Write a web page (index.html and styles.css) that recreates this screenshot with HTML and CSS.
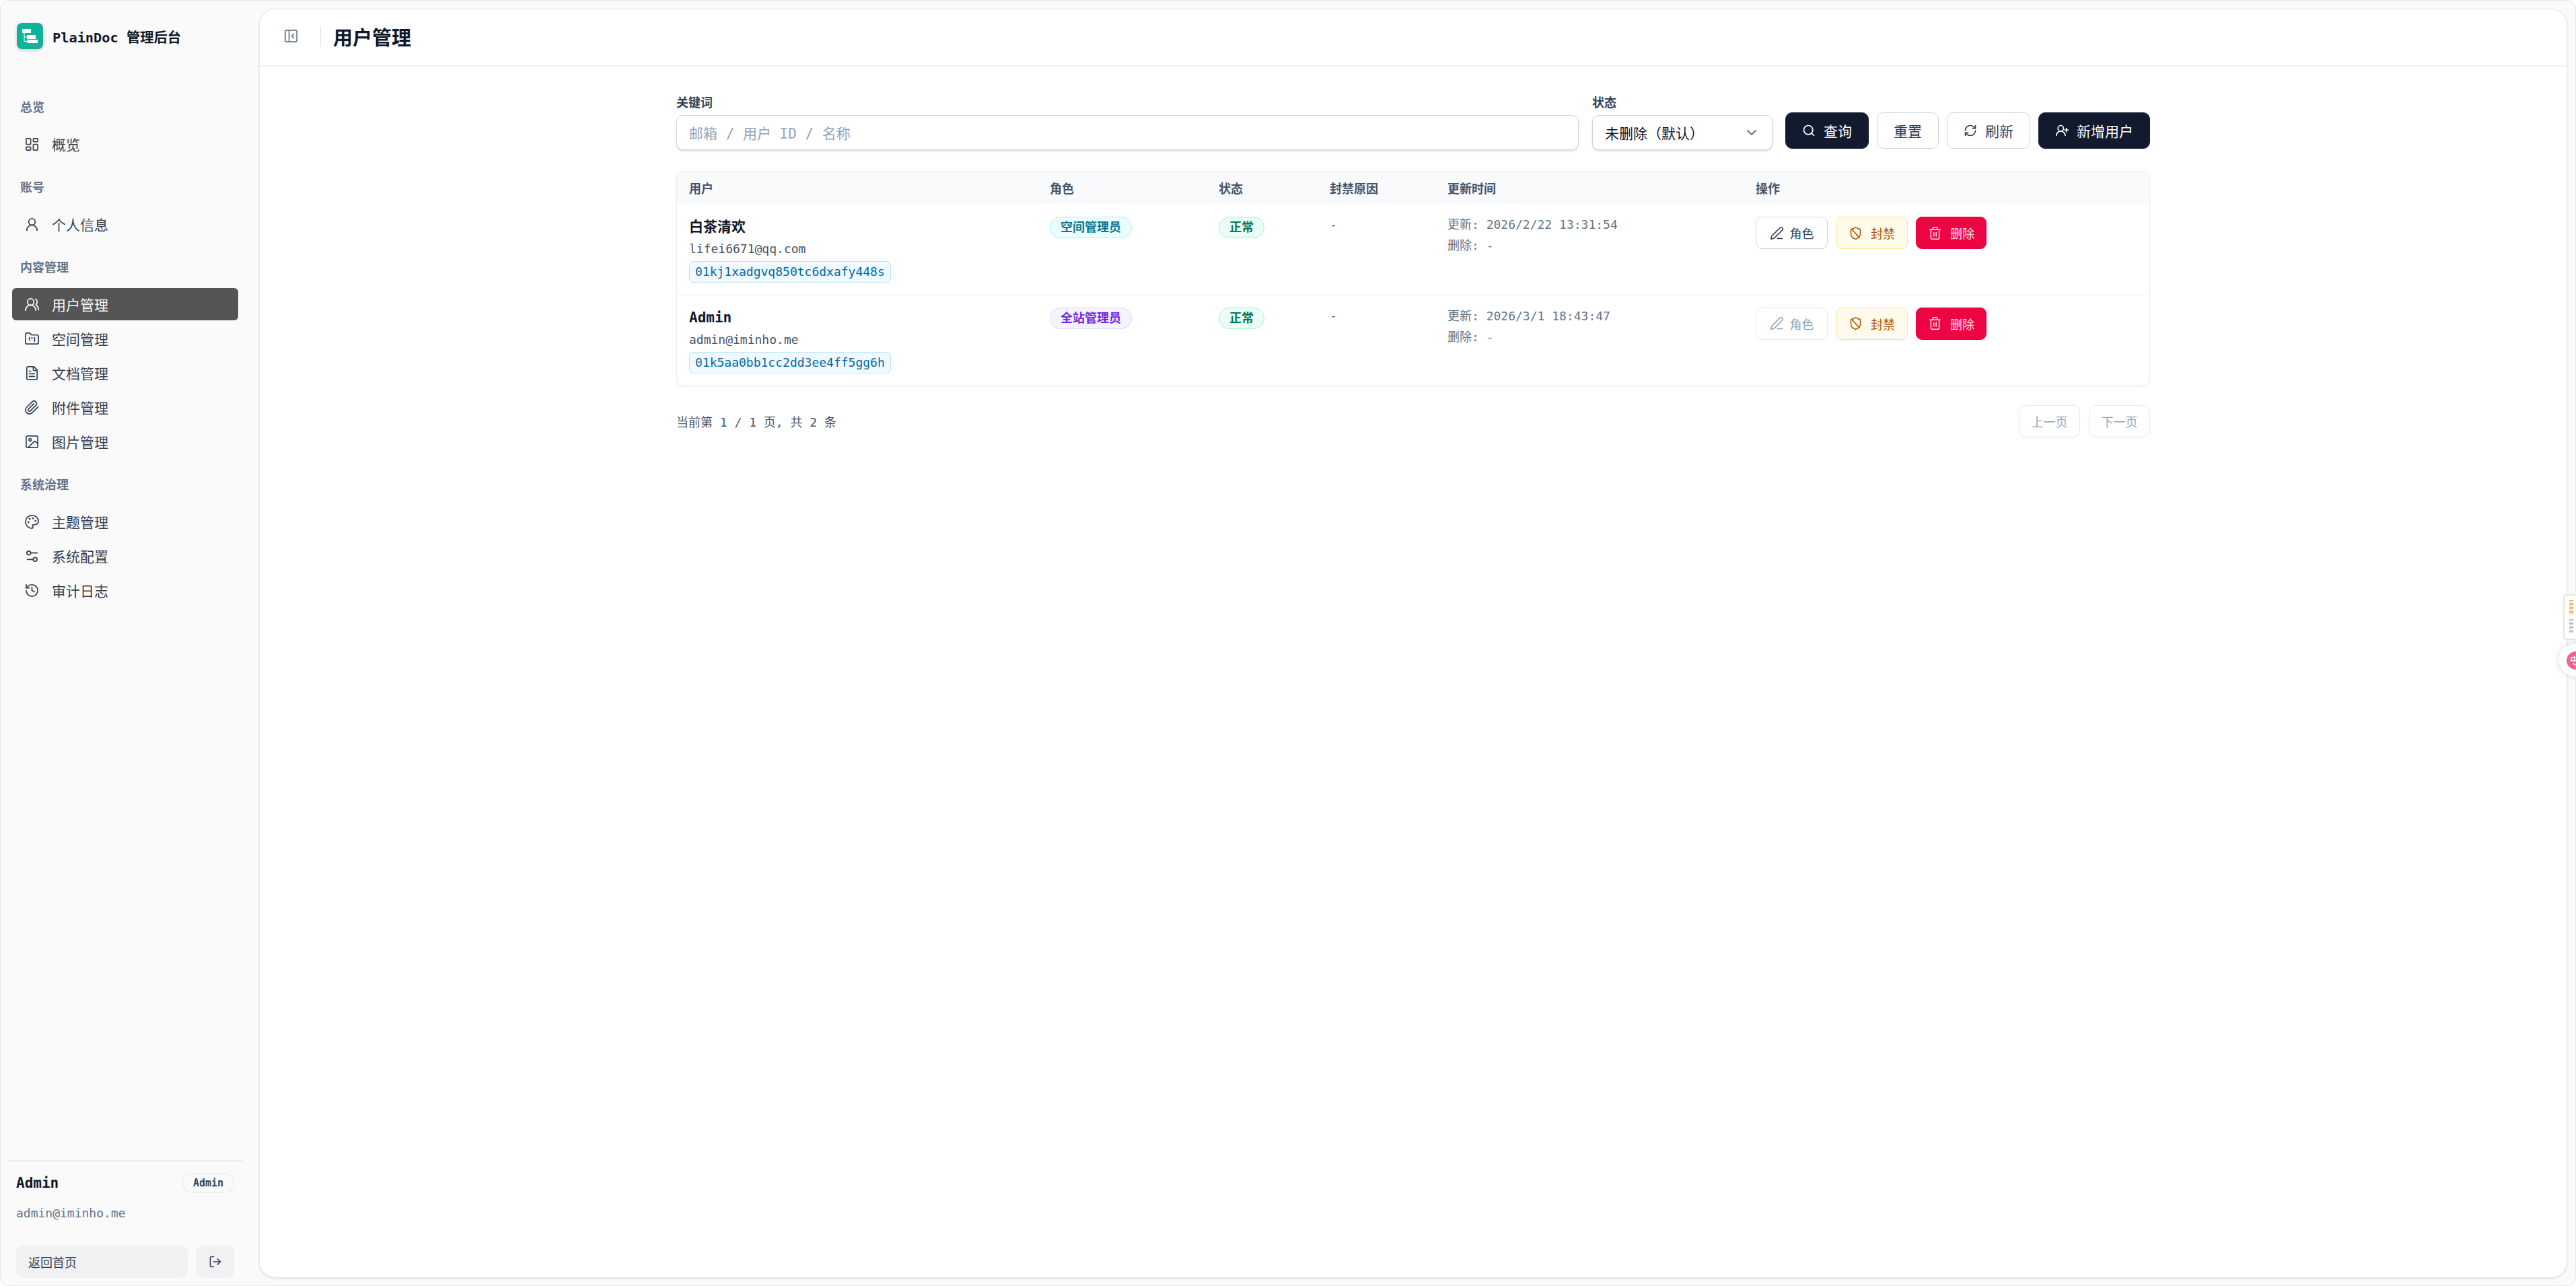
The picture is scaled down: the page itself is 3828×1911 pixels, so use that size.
FILE: index.html
```html
<!DOCTYPE html>
<html lang="zh-CN">
<head>
    <meta charset="UTF-8">
    <meta name="viewport" content="width=device-width, initial-scale=1.0">
    <title>用户管理 - PlainDoc 管理后台</title>
    <link rel="stylesheet" href="styles.css">
</head>
<body>
    <div class="app">
        <aside class="sidebar">
            <div class="brand">
                <span class="brand-logo">
                    <svg viewBox="0 0 39 39" width="39" height="39"><rect x="8" y="9" width="13" height="6" fill="#fff"/><rect x="15" y="18" width="13" height="6" fill="#fff"/><rect x="15" y="25" width="16" height="5" fill="#fff"/><path d="M11 15v12.5h4M11 21h4" fill="none" stroke="#fff" stroke-width="1"/></svg>
                </span>
                <span class="brand-name">PlainDoc 管理后台</span>
            </div>

            <nav class="nav">
                <div class="nav-group">
                    <div class="nav-label">总览</div>
                    <a class="nav-item">
                        <svg class="icon" viewBox="0 0 24 24"><rect x="3" y="3" width="7" height="9" rx="1"/><rect x="14" y="3" width="7" height="5" rx="1"/><rect x="14" y="12" width="7" height="9" rx="1"/><rect x="3" y="16" width="7" height="5" rx="1"/></svg>
                        概览
                    </a>
                </div>
                <div class="nav-group">
                    <div class="nav-label">账号</div>
                    <a class="nav-item">
                        <svg class="icon" viewBox="0 0 24 24"><circle cx="12" cy="8" r="5"/><path d="M20 21a8 8 0 0 0-16 0"/></svg>
                        个人信息
                    </a>
                </div>
                <div class="nav-group">
                    <div class="nav-label">内容管理</div>
                    <a class="nav-item active">
                        <svg class="icon" viewBox="0 0 24 24"><path d="M18 21a8 8 0 0 0-16 0"/><circle cx="10" cy="8" r="5"/><path d="M22 20c0-3.4-2-6.5-4-8a5 5 0 0 0-.5-8.5"/></svg>
                        用户管理
                    </a>
                    <a class="nav-item">
                        <svg class="icon" viewBox="0 0 24 24"><path d="M20 20a2 2 0 0 0 2-2V8a2 2 0 0 0-2-2h-7.9a2 2 0 0 1-1.7-.9l-.8-1.2A2 2 0 0 0 7.9 3H4a2 2 0 0 0-2 2v13a2 2 0 0 0 2 2Z"/><path d="M8 10v4M12 10v2M16 10v6"/></svg>
                        空间管理
                    </a>
                    <a class="nav-item">
                        <svg class="icon" viewBox="0 0 24 24"><path d="M15 2H6a2 2 0 0 0-2 2v16a2 2 0 0 0 2 2h12a2 2 0 0 0 2-2V7Z"/><path d="M14 2v4a2 2 0 0 0 2 2h4M10 9H8M16 13H8M16 17H8"/></svg>
                        文档管理
                    </a>
                    <a class="nav-item">
                        <svg class="icon" viewBox="0 0 24 24"><path d="m21.44 11.05-9.19 9.19a6 6 0 0 1-8.49-8.49l8.57-8.57A4 4 0 1 1 18 8.84l-8.59 8.57a2 2 0 0 1-2.83-2.83l8.49-8.48"/></svg>
                        附件管理
                    </a>
                    <a class="nav-item">
                        <svg class="icon" viewBox="0 0 24 24"><rect x="3" y="3" width="18" height="18" rx="2"/><circle cx="9" cy="9" r="2"/><path d="m21 15-3.1-3.1a2 2 0 0 0-2.8 0L6 21"/></svg>
                        图片管理
                    </a>
                </div>
                <div class="nav-group">
                    <div class="nav-label">系统治理</div>
                    <a class="nav-item">
                        <svg class="icon" viewBox="0 0 24 24"><circle cx="13.5" cy="6.5" r=".6"/><circle cx="17.5" cy="10.5" r=".6"/><circle cx="8.5" cy="7.5" r=".6"/><circle cx="6.5" cy="12.5" r=".6"/><path d="M12 2C6.5 2 2 6.5 2 12s4.5 10 10 10c.9 0 1.6-.7 1.6-1.7 0-.4-.2-.8-.4-1.1-.3-.3-.4-.7-.4-1.1a1.6 1.6 0 0 1 1.6-1.7h2c3 0 5.6-2.5 5.6-5.6C22 6 17.5 2 12 2Z"/></svg>
                        主题管理
                    </a>
                    <a class="nav-item">
                        <svg class="icon" viewBox="0 0 24 24"><path d="M20 7h-9M14 17H5"/><circle cx="17" cy="17" r="3"/><circle cx="7" cy="7" r="3"/></svg>
                        系统配置
                    </a>
                    <a class="nav-item">
                        <svg class="icon" viewBox="0 0 24 24"><path d="M3 12a9 9 0 1 0 9-9 9.75 9.75 0 0 0-6.74 2.74L3 8"/><path d="M3 3v5h5M12 7v5l4 2"/></svg>
                        审计日志
                    </a>
                </div>
            </nav>

            <div class="side-footer">
                <div class="side-user">
                    <span class="side-name">Admin</span>
                    <span class="side-badge">Admin</span>
                </div>
                <div class="side-email">admin@iminho.me</div>
                <div class="side-actions">
                    <a class="side-home">返回首页</a>
                    <a class="side-logout">
                        <svg class="icon" viewBox="0 0 24 24"><path d="M9 21H5a2 2 0 0 1-2-2V5a2 2 0 0 1 2-2h4M16 17l5-5-5-5M21 12H9"/></svg>
                    </a>
                </div>
            </div>
        </aside>

        <main class="main">
            <header class="topbar">
                <svg class="icon toggle" viewBox="0 0 24 24"><rect x="3" y="3" width="18" height="18" rx="2"/><path d="M9 3v18M16 15l-3-3 3-3"/></svg>
                <span class="topbar-sep"></span>
                <h1 class="page-title">用户管理</h1>
            </header>

            <div class="content">
                <form class="filters">
                    <div class="field field-grow">
                        <label class="field-label">关键词</label>
                        <div class="input placeholder">邮箱 / 用户 ID / 名称</div>
                    </div>
                    <div class="field field-status">
                        <label class="field-label">状态</label>
                        <div class="input select">
                            未删除（默认）
                            <svg class="chevron" viewBox="0 0 24 24"><path d="m6 9 6 6 6-6"/></svg>
                        </div>
                    </div>
                    <button type="button" class="btn btn-dark">
                        <svg class="icon" viewBox="0 0 24 24"><circle cx="11" cy="11" r="8"/><path d="m21 21-4.3-4.3"/></svg>
                        查询
                    </button>
                    <button type="button" class="btn btn-plain">重置</button>
                    <button type="button" class="btn btn-plain">
                        <svg class="icon" viewBox="0 0 24 24"><path d="M3 12a9 9 0 0 1 9-9 9.75 9.75 0 0 1 6.74 2.74L21 8"/><path d="M21 3v5h-5M21 12a9 9 0 0 1-9 9 9.75 9.75 0 0 1-6.74-2.74L3 16"/><path d="M8 16H3v5"/></svg>
                        刷新
                    </button>
                    <button type="button" class="btn btn-dark">
                        <svg class="icon" viewBox="0 0 24 24"><path d="M2 21a8 8 0 0 1 16 0"/><circle cx="10" cy="8" r="5"/><path d="M20 8v6M23 11h-6"/></svg>
                        新增用户
                    </button>
                </form>

                <div class="table-card">
                    <table class="table">
                        <thead>
                            <tr>
                                <th class="col-user">用户</th>
                                <th class="col-role">角色</th>
                                <th class="col-status">状态</th>
                                <th class="col-reason">封禁原因</th>
                                <th class="col-time">更新时间</th>
                                <th>操作</th>
                            </tr>
                        </thead>
                        <tbody>
                            <tr>
                                <td>
                                    <div class="user-name">白茶清欢</div>
                                    <div class="user-email">lifei6671@qq.com</div>
                                    <span class="user-id">01kj1xadgvq850tc6dxafy448s</span>
                                </td>
                                <td><span class="badge badge-cyan">空间管理员</span></td>
                                <td><span class="badge badge-green">正常</span></td>
                                <td class="reason">-</td>
                                <td class="time">
                                    <div>更新: 2026/2/22 13:31:54</div>
                                    <div>删除: -</div>
                                </td>
                                <td>
                                    <div class="actions">
                                        <button type="button" class="act act-plain">
                                            <svg class="icon" viewBox="0 0 24 24"><path d="M13 21h8"/><path d="M21.2 6.8a2.8 2.8 0 0 0-4-4L3.8 16.2a2 2 0 0 0-.5.8l-1.3 4.4a.5.5 0 0 0 .6.6l4.4-1.3a2 2 0 0 0 .8-.5Z"/></svg>
                                            角色
                                        </button>
                                        <button type="button" class="act act-warn">
                                            <svg class="icon" viewBox="0 0 24 24"><path d="M20 13c0 5-3.5 7.5-7.7 9a1 1 0 0 1-.6 0C7.5 20.5 4 18 4 13V6a1 1 0 0 1 1-1c2 0 4.5-1.2 6.2-2.7a1.2 1.2 0 0 1 1.6 0C14.5 3.8 17 5 19 5a1 1 0 0 1 1 1Z"/><path d="m6 6 12 13"/></svg>
                                            封禁
                                        </button>
                                        <button type="button" class="act act-danger">
                                            <svg class="icon" viewBox="0 0 24 24"><path d="M3 6h18M19 6v14a2 2 0 0 1-2 2H7a2 2 0 0 1-2-2V6M8 6V4a2 2 0 0 1 2-2h4a2 2 0 0 1 2 2v2M10 11v6M14 11v6"/></svg>
                                            删除
                                        </button>
                                    </div>
                                </td>
                            </tr>
                            <tr>
                                <td>
                                    <div class="user-name">Admin</div>
                                    <div class="user-email">admin@iminho.me</div>
                                    <span class="user-id">01k5aa0bb1cc2dd3ee4ff5gg6h</span>
                                </td>
                                <td><span class="badge badge-purple">全站管理员</span></td>
                                <td><span class="badge badge-green">正常</span></td>
                                <td class="reason">-</td>
                                <td class="time">
                                    <div>更新: 2026/3/1 18:43:47</div>
                                    <div>删除: -</div>
                                </td>
                                <td>
                                    <div class="actions">
                                        <button type="button" class="act act-plain act-disabled">
                                            <svg class="icon" viewBox="0 0 24 24"><path d="M13 21h8"/><path d="M21.2 6.8a2.8 2.8 0 0 0-4-4L3.8 16.2a2 2 0 0 0-.5.8l-1.3 4.4a.5.5 0 0 0 .6.6l4.4-1.3a2 2 0 0 0 .8-.5Z"/></svg>
                                            角色
                                        </button>
                                        <button type="button" class="act act-warn">
                                            <svg class="icon" viewBox="0 0 24 24"><path d="M20 13c0 5-3.5 7.5-7.7 9a1 1 0 0 1-.6 0C7.5 20.5 4 18 4 13V6a1 1 0 0 1 1-1c2 0 4.5-1.2 6.2-2.7a1.2 1.2 0 0 1 1.6 0C14.5 3.8 17 5 19 5a1 1 0 0 1 1 1Z"/><path d="m6 6 12 13"/></svg>
                                            封禁
                                        </button>
                                        <button type="button" class="act act-danger">
                                            <svg class="icon" viewBox="0 0 24 24"><path d="M3 6h18M19 6v14a2 2 0 0 1-2 2H7a2 2 0 0 1-2-2V6M8 6V4a2 2 0 0 1 2-2h4a2 2 0 0 1 2 2v2M10 11v6M14 11v6"/></svg>
                                            删除
                                        </button>
                                    </div>
                                </td>
                            </tr>
                        </tbody>
                    </table>
                </div>

                <div class="pager">
                    <span class="pager-text">当前第 1 / 1 页, 共 2 条</span>
                    <div class="pager-btns">
                        <button type="button" class="page-btn">上一页</button>
                        <button type="button" class="page-btn">下一页</button>
                    </div>
                </div>
            </div>
        </main>
    </div>

    <div class="float-tab">
        <span class="float-bars float-bars-on"></span>
        <span class="float-bars"></span>
    </div>
    <div class="float-ball">
        <span class="float-dot">
            <svg viewBox="0 0 14 16" width="14" height="16"><path d="M1 3h9v5H1zM5.5 1v7M5 11c-1 2 1 3.5 4 3" fill="none" stroke="#fff" stroke-width="1.5"/></svg>
        </span>
    </div>
</body>
</html>
```

FILE: styles.css
```css
* {
    box-sizing: border-box;
}

html, body {
    margin: 0;
    height: 100%;
}

body {
    font-family: "DejaVu Sans Mono", "Noto Sans CJK SC", monospace;
    background: #fff;
    color: #0f172a;
    overflow: hidden;
}

.app {
    display: flex;
    height: 100vh;
    background: #fafafa;
    border-radius: 14px;
    box-shadow: inset 0 0 0 1px #e8e8ea;
    padding: 13px 13px 12px 0;
}

.icon {
    width: 23px;
    height: 23px;
    flex: none;
    fill: none;
    stroke: currentColor;
    stroke-width: 1.8;
    stroke-linecap: round;
    stroke-linejoin: round;
}

/* sidebar */
.sidebar {
    width: 385px;
    flex: none;
    display: flex;
    flex-direction: column;
    padding: 21px 12px 0;
}

.brand {
    display: flex;
    align-items: center;
    gap: 14px;
    padding-left: 13px;
    height: 39px;
}

.brand-logo {
    width: 39px;
    height: 39px;
    border-radius: 8px;
    background: #10b39a;
    box-shadow: 0 2px 5px rgba(15, 23, 42, 0.2);
    display: flex;
}

.brand-name {
    font-size: 20.3px;
    font-weight: 700;
    color: #0f172a;
}

.nav {
    margin-top: 74px;
    padding: 0 6px;
    width: 348px;
}

.nav-group {
    margin-bottom: 28px;
}

.nav-label {
    font-size: 18px;
    font-weight: 700;
    line-height: 26px;
    color: #64748b;
    padding-left: 12px;
    margin-bottom: 17px;
}

.nav-item {
    display: flex;
    align-items: center;
    gap: 18px;
    height: 48px;
    margin-bottom: 3px;
    padding-left: 18px;
    border-radius: 6px;
    font-size: 21px;
    color: #334155;
}

.nav-item.active {
    background: #555555;
    color: #fafafa;
}

.side-footer {
    margin-top: auto;
    border-top: 2px solid #e8ecf2;
    width: 348px;
    padding: 17px 12px 0;
}

.side-user {
    display: flex;
    align-items: center;
    justify-content: space-between;
}

.side-name {
    font-size: 21px;
    font-weight: 700;
}

.side-badge {
    height: 30px;
    width: 77px;
    border: 1px solid #e2e8f0;
    border-radius: 15px;
    background: #f8fafc;
    color: #334155;
    font-size: 15px;
    font-weight: 700;
    display: flex;
    align-items: center;
    justify-content: center;
}

.side-email {
    margin-top: 18px;
    font-size: 18px;
    line-height: 24px;
    color: #64748b;
}

.side-actions {
    display: flex;
    gap: 12px;
    margin-top: 36px;
}

.side-home {
    flex: 1;
    height: 48px;
    padding-left: 18px;
    background: #f1f1f3;
    border-radius: 10px;
    display: flex;
    align-items: center;
    font-size: 18px;
    color: #334155;
}

.side-logout {
    width: 57px;
    height: 48px;
    background: #f1f1f3;
    border-radius: 10px;
    color: #334155;
    display: flex;
    align-items: center;
    justify-content: center;
}

.side-logout .icon {
    width: 20px;
    height: 20px;
    stroke-width: 2;
}

/* main panel */
.main {
    flex: 1;
    background: #fff;
    border: 1px solid #e5e7eb;
    border-radius: 24px;
    box-shadow: 0 1px 3px rgba(15, 23, 42, 0.12);
    overflow: hidden;
}

.topbar {
    height: 85px;
    border-bottom: 2px solid #eef0f3;
    display: flex;
    align-items: center;
    padding: 0 0 4px 35px;
}

.toggle {
    color: #64748b;
}

.topbar-sep {
    width: 1px;
    height: 30px;
    background: #e2e8f0;
    margin: 0 18px 0 32px;
}

.page-title {
    margin: 0;
    font-size: 29px;
    font-weight: 700;
    color: #0f172a;
}

.content {
    width: 2190px;
    margin: 0 auto;
    padding-top: 34px;
}

/* filters */
.filters {
    display: flex;
    align-items: flex-end;
    gap: 12px;
    height: 92px;
    padding-bottom: 2px;
}

.field {
    display: flex;
    flex-direction: column;
    margin-right: 8px;
}

.field-grow {
    flex: 1;
}

.field-status {
    width: 268px;
    margin-right: 7px;
}

.field-label {
    font-size: 18px;
    font-weight: 700;
    line-height: 26px;
    color: #334155;
    margin-bottom: 5px;
}

.input {
    height: 52px;
    border: 1px solid #cbd5e1;
    border-radius: 10px;
    background: #fff;
    box-shadow: 0 2px 3px rgba(15, 23, 42, 0.14);
    display: flex;
    align-items: center;
    padding: 0 18px;
    font-size: 21px;
}

.placeholder {
    color: #94a3b8;
}

.select {
    justify-content: space-between;
    color: #0f172a;
}

.chevron {
    width: 24px;
    height: 24px;
    flex: none;
    fill: none;
    stroke: #64748b;
    stroke-width: 2;
    stroke-linecap: round;
    stroke-linejoin: round;
}

.btn {
    height: 54px;
    margin-bottom: 2px;
    padding: 0 24px;
    border-radius: 10px;
    font-family: inherit;
    font-size: 21px;
    display: flex;
    align-items: center;
    gap: 12px;
    flex: none;
}

.btn .icon {
    width: 20px;
    height: 20px;
    stroke-width: 2;
}

.btn-dark {
    background: #111a2e;
    border: 1px solid #111a2e;
    color: #fff;
}

.btn-plain {
    background: #fff;
    border: 1px solid #cbd5e1;
    color: #334155;
}

/* table */
.table-card {
    margin-top: 29px;
    border: 1px solid #e8ecf2;
    border-radius: 10px;
    overflow: hidden;
    box-shadow: 0 1px 2px rgba(15, 23, 42, 0.05);
}

.table {
    width: 100%;
    border-collapse: collapse;
    table-layout: fixed;
}

.table th {
    height: 48px;
    background: #f8fafc;
    text-align: left;
    padding: 0 0 0 18px;
    font-size: 18px;
    font-weight: 700;
    color: #475569;
}

.col-user {
    width: 536px;
}

.col-role {
    width: 251px;
}

.col-status {
    width: 165px;
}

.col-reason {
    width: 175px;
}

.col-time {
    width: 458px;
}

.table td {
    height: 135px;
    padding: 19px 0 0 18px;
    vertical-align: top;
    font-size: 18px;
}

.table tbody tr + tr td {
    border-top: 1px solid #eef0f3;
    padding-top: 18px;
}

.user-name {
    font-size: 21px;
    font-weight: 700;
    line-height: 30px;
    color: #0f172a;
}

.user-email {
    margin-top: 3px;
    line-height: 30px;
    color: #475569;
}

.user-id {
    display: inline-block;
    margin-top: 3px;
    height: 32px;
    line-height: 30px;
    padding: 0 8px;
    border: 1px solid #bae6fd;
    border-radius: 6px;
    background: #f0f9ff;
    color: #0369a1;
}

.badge {
    display: inline-block;
    height: 32px;
    line-height: 30px;
    padding: 0 15px;
    border: 1px solid;
    border-radius: 16px;
    font-weight: 700;
}

.badge-cyan {
    background: #ecfeff;
    border-color: #a5f3fc;
    color: #0e7490;
}

.badge-purple {
    background: #f5f3ff;
    border-color: #ddd6fe;
    color: #6d28d9;
}

.badge-green {
    background: #ecfdf5;
    border-color: #a7f3d0;
    color: #047857;
}

.table td.reason {
    color: #475569;
    line-height: 24px;
}

.table td.time,
.table tbody tr + tr td.time {
    color: #64748b;
    line-height: 31px;
    padding-top: 15px;
}

.actions {
    display: flex;
    gap: 12px;
}

.act {
    height: 48px;
    width: 107px;
    border: 1px solid;
    border-radius: 9px;
    font-family: inherit;
    font-size: 18px;
    display: flex;
    align-items: center;
    justify-content: center;
    gap: 12px;
}

.act .icon {
    width: 21px;
    height: 21px;
}

.act-plain {
    background: #fff;
    border-color: #cbd5e1;
    color: #334155;
    gap: 9px;
}

.act-disabled {
    border-color: #e2e8f0;
    color: #94a3b8;
}

.act-warn {
    background: #fffbeb;
    border-color: #fde68a;
    color: #b45309;
}

.act-danger {
    background: #ec0443;
    border-color: #ec0443;
    color: #ffe4ea;
    width: 105px;
}

/* pagination */
.pager {
    margin-top: 28px;
    display: flex;
    align-items: center;
    justify-content: space-between;
}

.pager-text {
    font-size: 18px;
    color: #475569;
}

.pager-btns {
    display: flex;
    gap: 13px;
}

.page-btn {
    width: 91px;
    height: 48px;
    background: #fff;
    border: 1px solid #e2e8f0;
    border-radius: 10px;
    font-family: inherit;
    font-size: 18px;
    color: #94a3b8;
}

/* browser extension widgets at the right edge */
.float-tab {
    position: fixed;
    right: 0;
    top: 883px;
    width: 19px;
    height: 68px;
    background: #fff;
    border: 2px solid #e5e5e5;
    border-right: 0;
    border-radius: 5px 0 0 5px;
    padding: 7px 0 0 7px;
}

.float-bars {
    display: block;
    width: 6px;
    height: 22px;
    margin-bottom: 6px;
    background: repeating-linear-gradient(#b5b5b5 0 1px, #fff 1px 2px);
}

.float-bars-on {
    background: repeating-linear-gradient(#e8a33c 0 1px, #fff 1px 2px);
}

.float-ball {
    position: fixed;
    right: 0;
    top: 957px;
    width: 25px;
    height: 48px;
    background: #fff;
    border-radius: 24px 0 0 24px;
    box-shadow: 0 0 12px rgba(0, 0, 0, 0.14);
    padding: 11px 0 0 11px;
    overflow: hidden;
}

.float-dot {
    display: block;
    width: 28px;
    height: 27px;
    border-radius: 50%;
    background: #e9678f;
    padding: 6px 0 0 6px;
}
```
